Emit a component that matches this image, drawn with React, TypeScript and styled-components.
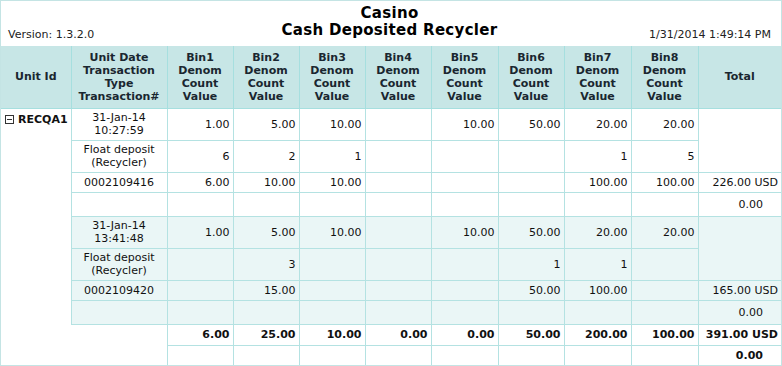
import React from "react";
import styled, { createGlobalStyle } from "styled-components";

const GlobalStyle = createGlobalStyle`
  body {
    margin: 0;
    background: #fff;
    font-family: "DejaVu Sans", Verdana, sans-serif;
  }
`;

const Frame = styled.div`
  width: 780px;
  border: 1px solid #c4e4e4;
  background: #fff;
  font-size: 11px;
  line-height: 13px;
  color: #111;
`;

const Banner = styled.div`
  display: grid;
  grid-template-columns: 1fr auto 1fr;
  align-items: end;
  height: 45px;
  box-sizing: border-box;
  padding: 4px 10px 5px 7px;
`;

const Version = styled.div`
  color: #222;
`;

const Title = styled.div`
  align-self: start;
  text-align: center;
  font-size: 15px;
  line-height: 17px;
  letter-spacing: 0.3px;
  font-weight: bold;
  color: #000;
`;

const Stamp = styled.div`
  text-align: right;
  color: #222;
`;

const Sheet = styled.table`
  width: 780px;
  table-layout: fixed;
  border-collapse: collapse;
  border-style: hidden;
`;

const Col = styled.col<{ $w: number }>`
  width: ${(p) => p.$w}px;
`;

const Row = styled.tr<{ $h: number }>`
  height: ${(p) => p.$h}px;
`;

const Head = styled.th`
  background: #c7e6e6;
  border: 1px solid #a6dfdf;
  color: #1a2630;
  font-weight: bold;
  text-align: center;
  vertical-align: middle;
  padding: 0 2px;
`;

const Cell = styled.td<{
  $align?: "left" | "center" | "right";
  $shade?: boolean;
  $bold?: boolean;
  $inset?: number;
}>`
  border: 1px solid #b4e2e2;
  background: ${(p) => (p.$shade ? "#eaf6f6" : "#fff")};
  text-align: ${(p) => p.$align ?? "right"};
  font-weight: ${(p) => (p.$bold ? "bold" : "normal")};
  vertical-align: middle;
  padding: 0 ${(p) => p.$inset ?? 3}px 0 3px;
  white-space: nowrap;
  color: #111;
`;

const UnitCell = styled.td`
  border: none;
  vertical-align: top;
  padding: 4px 0 0 4px;
  font-weight: bold;
  color: #111;
  white-space: nowrap;
`;

const Blank = styled.td`
  border: none;
  background: #fff;
`;

const Toggle = styled.svg`
  width: 9px;
  height: 9px;
  margin-right: 4px;
  vertical-align: -1px;
`;

const widths = [70, 96, 66, 66, 66, 66, 67, 66, 67, 67, 83];

type Group = {
  date: string;
  time: string;
  txn: string;
  denoms: string[];
  counts: string[];
  values: string[];
  total: string;
};

const groups: Group[] = [
  {
    date: "31-Jan-14",
    time: "10:27:59",
    txn: "0002109416",
    denoms: ["1.00", "5.00", "10.00", "", "10.00", "50.00", "20.00", "20.00"],
    counts: ["6", "2", "1", "", "", "", "1", "5"],
    values: ["6.00", "10.00", "10.00", "", "", "", "100.00", "100.00"],
    total: "226.00 USD",
  },
  {
    date: "31-Jan-14",
    time: "13:41:48",
    txn: "0002109420",
    denoms: ["1.00", "5.00", "10.00", "", "10.00", "50.00", "20.00", "20.00"],
    counts: ["", "3", "", "", "", "1", "1", ""],
    values: ["", "15.00", "", "", "", "50.00", "100.00", ""],
    total: "165.00 USD",
  },
];

const grand = ["6.00", "25.00", "10.00", "0.00", "0.00", "50.00", "200.00", "100.00"];
const blanks = ["", "", "", "", "", "", "", ""];

const GroupRows = ({ g, shade, first }: { g: Group; shade: boolean; first: boolean }) => (
  <>
    <Row $h={32}>
      {first && (
        <UnitCell rowSpan={10}>
          <Toggle viewBox="0 0 9 9">
            <rect x="0.5" y="0.5" width="8" height="8" fill="none" stroke="#333" />
            <line x1="2" y1="4.5" x2="7" y2="4.5" stroke="#333" />
          </Toggle>
          RECQA1
        </UnitCell>
      )}
      <Cell $align="center" $shade={shade}>
        {g.date}
        <br />
        {g.time}
      </Cell>
      {g.denoms.map((v, i) => (
        <Cell key={i} $shade={shade}>{v}</Cell>
      ))}
      <Cell rowSpan={2} $shade={shade} />
    </Row>
    <Row $h={32}>
      <Cell $align="center" $shade={shade}>
        Float deposit
        <br />
        (Recycler)
      </Cell>
      {g.counts.map((v, i) => (
        <Cell key={i} $shade={shade}>{v}</Cell>
      ))}
    </Row>
    <Row $h={20}>
      <Cell $align="center" $shade={shade}>{g.txn}</Cell>
      {g.values.map((v, i) => (
        <Cell key={i} $shade={shade}>{v}</Cell>
      ))}
      <Cell $shade={shade}>{g.total}</Cell>
    </Row>
    <Row $h={24}>
      <Cell $shade={shade} />
      {blanks.map((v, i) => (
        <Cell key={i} $shade={shade}>{v}</Cell>
      ))}
      <Cell $shade={shade} $inset={18}>0.00</Cell>
    </Row>
  </>
);

export default function App() {
  return (
    <>
      <GlobalStyle />
      <Frame>
        <Banner>
          <Version>Version: 1.3.2.0</Version>
          <Title>
            Casino
            <br />
            Cash Deposited Recycler
          </Title>
          <Stamp>1/31/2014 1:49:14 PM</Stamp>
        </Banner>
        <Sheet>
          <colgroup>
            {widths.map((w, i) => (
              <Col key={i} $w={w} />
            ))}
          </colgroup>
          <thead>
            <Row $h={62}>
              <Head>Unit Id</Head>
              <Head>
                Unit Date
                <br />
                Transaction
                <br />
                Type
                <br />
                Transaction#
              </Head>
              {[1, 2, 3, 4, 5, 6, 7, 8].map((n) => (
                <Head key={n}>
                  Bin{n}
                  <br />
                  Denom
                  <br />
                  Count
                  <br />
                  Value
                </Head>
              ))}
              <Head>Total</Head>
            </Row>
          </thead>
          <tbody>
            {groups.map((g, i) => (
              <GroupRows key={i} g={g} shade={i % 2 === 1} first={i === 0} />
            ))}
            <Row $h={21}>
              <Blank rowSpan={2} />
              {grand.map((v, i) => (
                <Cell key={i} $bold>{v}</Cell>
              ))}
              <Cell $bold>391.00 USD</Cell>
            </Row>
            <Row $h={20}>
              {blanks.map((v, i) => (
                <Cell key={i}>{v}</Cell>
              ))}
              <Cell $bold $inset={18}>0.00</Cell>
            </Row>
          </tbody>
        </Sheet>
      </Frame>
    </>
  );
}
